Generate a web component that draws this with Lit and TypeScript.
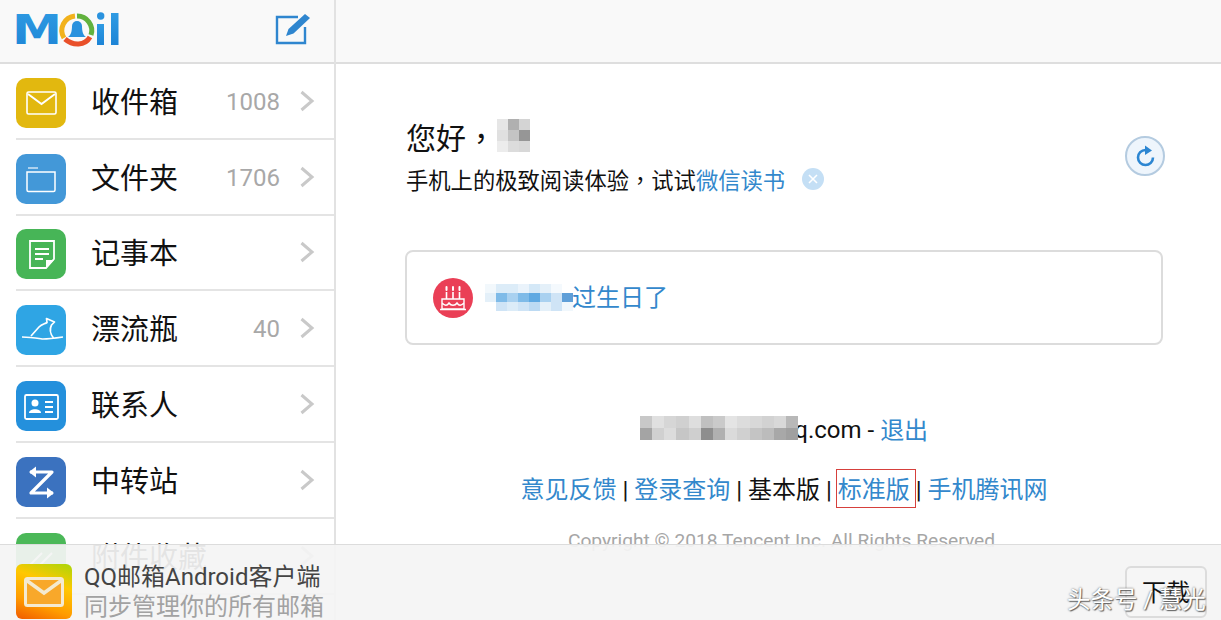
import { LitElement, css, html, svg } from "lit";
import { customElement } from "lit/decorators.js";

const chevron = html`<svg class="chev" viewBox="0 0 16 22"><path d="M2.5 2 L13 11 L2.5 20" fill="none" stroke="#c9c9c9" stroke-width="3"/></svg>`;

const icons: Record<string, unknown> = {
  mail: svg`<rect x="11" y="14" width="29" height="22" rx="1.5" fill="none" stroke="#fff" stroke-width="1.6"/><path d="M12 16 L25.5 26 L39 16" fill="none" stroke="#fff" stroke-width="2"/>`,
  folder: svg`<path d="M11 18 V36 a1.5 1.5 0 0 0 1.5 1.5 H37.5 a1.5 1.5 0 0 0 1.5 -1.5 V18 Z" fill="none" stroke="#fff" stroke-width="1.5"/><path d="M12 14 H22" stroke="#cfe4f6" stroke-width="1.5"/>`,
  note: svg`<path d="M14 12 H38 V30 L30 39 H14 Z" fill="none" stroke="#fff" stroke-width="1.8"/><path d="M38 31 L30 39 V31 Z" fill="#fff"/><path d="M19 20 H33 M19 25 H33 M19 30 H27" stroke="#fff" stroke-width="1.8"/>`,
  bird: svg`<path d="M15 31 L23 22 C26 19 29 19 31 17.5 L30.5 13.5 L38.5 17 L35.5 20 C33.5 24 33.5 28 37.5 33" fill="none" stroke="#fff" stroke-width="1.7" stroke-linejoin="round"/><path d="M6 32 C14 32 20 33 27 34 C33 34 40 33 47 32" fill="none" stroke="#fff" stroke-width="1.6"/>`,
  card: svg`<rect x="9" y="14" width="33" height="24" rx="1.5" fill="none" stroke="#fff" stroke-width="1.8"/><circle cx="19" cy="22" r="3.5" fill="#fff"/><path d="M13 32 C13 27 25 27 25 32 Z" fill="#fff"/><path d="M29 21 H37 M29 26 H37 M29 31 H37" stroke="#fff" stroke-width="1.8"/>`,
  transfer: svg`<path d="M14 15 H36 L15 36 H37" fill="none" stroke="#fff" stroke-width="3.2" stroke-linejoin="round"/><path d="M20 9.5 L13 15 L20 20.5 Z M31 30.5 L38 36 L31 41.5 Z" fill="#fff"/>`,
  clip: svg`<path d="M12 34 L26 20 M20 36 L36 20" stroke="#fff" stroke-width="1.8"/>`,
};

const rows = [
  { name: "收件箱", count: "1008", icon: "mail", color: "#e2b80f" },
  { name: "文件夹", count: "1706", icon: "folder", color: "#4398d8" },
  { name: "记事本", count: "", icon: "note", color: "#47b557" },
  { name: "漂流瓶", count: "40", icon: "bird", color: "#2fa5e4" },
  { name: "联系人", count: "", icon: "card", color: "#2490dc" },
  { name: "中转站", count: "", icon: "transfer", color: "#3b72bf" },
  { name: "附件收藏", count: "", icon: "clip", color: "#4bb858" },
];

// censored bits of the screenshot, each cell one grey value
const nameCells = [
  ["#e6e6e6", "#b0b0b0", "#d4d4d4"],
  ["#e0e0e0", "#c4c4c4", "#969696"],
  ["#ececec", "#dcdcdc", "#d8d8d8"],
];
const birthdayCells = [
  ["#f2f8fc", "#dcecf8", "#dcecf8", "#eaf3fb", "#d4e8f7", "#e4f0f9", "#f4f9fd", "#ffffff"],
  ["#e4f0f9", "#7fbbe8", "#a9d1f0", "#7fbbe8", "#5fa9e2", "#a9d1f0", "#cfe4f6", "#5f9fd8"],
  ["#ffffff", "#cfe4f6", "#dcecf8", "#cfe4f6", "#bcdaf3", "#e4f0f9", "#cfe4f6", "#f0f7fc"],
];
const mailCells = [
  ["#c8c8c8", "#e0e0e0", "#d6d6d6", "#d0d0d0", "#dedede", "#c0c0c0", "#cacaca", "#e4e4e4", "#dcdcdc", "#d8d8d8", "#d2d2d2", "#d8d8d8", "#b8b8b8"],
  ["#a4a4a4", "#d0d0d0", "#dcdcdc", "#c6c6c6", "#cfcfcf", "#8e8e8e", "#b0b0b0", "#dadada", "#d0d0d0", "#c4c4c4", "#bcbcbc", "#a8a8a8", "#a0a0a0"],
];

const mosaic = (cells: string[][], w: number, h: number) => html`
  <span class="mosaic">
    ${cells.map(
      (r) => html`<span class="mrow">
        ${r.map((c) => html`<i style="width:${w}px;height:${h}px;background:${c}"></i>`)}
      </span>`
    )}
  </span>
`;

@customElement("app-root")
export class AppRoot extends LitElement {
  render() {
    return html`
      <div class="page">
        <aside class="side">
          <div class="side-head">
            <svg class="logo" width="104" height="36" viewBox="0 0 104 36">
              <defs>
                <linearGradient id="lg" x1="0" y1="0" x2="0" y2="1">
                  <stop offset="0" stop-color="#2f9be3" />
                  <stop offset="1" stop-color="#1d84d6" />
                </linearGradient>
              </defs>
              <text x="-3" y="33" font-family="DejaVu Sans" font-weight="700" font-size="40" fill="url(#lg)" textLength="50" lengthAdjust="spacingAndGlyphs">M</text>
              <path d="M49 27 A14.5 14.5 0 0 1 60 5" fill="none" stroke="#f2b21c" stroke-width="5" />
              <path d="M62 5 A14.5 14.5 0 0 1 76 24" fill="none" stroke="#62b23e" stroke-width="5" />
              <path d="M75 26 C70 35 58 35 50 28" fill="none" stroke="#e9502a" stroke-width="5" />
              <circle cx="62" cy="15" r="5" fill="#2a92de" />
              <path d="M57 15 H67 C67 20 68 24 71 26 H53 C56 24 57 20 57 15 Z" fill="#2a92de" />
              <rect x="82" y="13" width="7" height="21" fill="url(#lg)" />
              <circle cx="85.7" cy="5" r="3.7" fill="#2a92de" />
              <rect x="96" y="2" width="7.5" height="32" fill="url(#lg)" />
            </svg>
            <svg class="compose" width="36" height="34" viewBox="0 0 36 34">
              <path d="M24 5 H3 V31 H31 V15" fill="none" stroke="#2f86cf" stroke-width="2.4" />
              <path d="M12 24 L14.5 17 L31 2 L36 6 L19.5 21.5 Z" fill="#2f86cf" />
            </svg>
          </div>
          ${rows.map(
            (r) => html`
              <div class="row">
                <div class="row-in">
                  <span class="icon" style="background:${r.color}">
                    <svg width="50" height="50" viewBox="0 0 50 50">${icons[r.icon]}</svg>
                  </span>
                  <span class="name">${r.name}</span>
                  <span class="count">${r.count}</span>
                  ${chevron}
                </div>
              </div>
            `
          )}
        </aside>

        <main class="main">
          <div class="main-head"></div>
          <div class="content">
            <div class="greet">
              <div>
                <div class="hello">您好<span class="tc">，</span>${mosaic(nameCells, 11, 11)}</div>
                <div class="tip">
                  手机上的极致阅读体验<span class="tc">，</span>试试<a>微信读书</a>
                  <svg class="tip-x" width="24" height="24" viewBox="0 0 24 24">
                    <circle cx="12" cy="12" r="11" fill="#c4dff5" />
                    <path d="M8 8 L16 16 M16 8 L8 16" stroke="#fff" stroke-width="1.6" />
                  </svg>
                </div>
              </div>
              <button class="refresh">
                <svg width="24" height="24" viewBox="0 0 24 24">
                  <path d="M12.5 6 A7.5 7.5 0 1 0 20 13.5" fill="none" stroke="#2c86d2" stroke-width="2.6" />
                  <path d="M12 1.5 L19 6.5 L12 11 Z" fill="#2c86d2" />
                </svg>
              </button>
            </div>

            <div class="notice">
              <svg width="40" height="40" viewBox="0 0 40 40">
                <circle cx="20" cy="20" r="20" fill="#ea3f56" />
                <path d="M9 21 H31 V31 H9 Z M7 31.5 H33 M9 25 C12 28 14 28 16 25 C18 28 22 28 24 25 C26 28 28 28 31 25" fill="none" stroke="#fff" stroke-width="1.4" />
                <path d="M13.5 14 V21 M20 14 V21 M26.5 14 V21" stroke="#fff" stroke-width="1.6" />
                <path d="M13.5 9 V12 M20 9 V12 M26.5 9 V12" stroke="#fff" stroke-width="2" stroke-linecap="round" />
              </svg>
              <span class="notice-text">${mosaic(birthdayCells, 11, 9)}<a>过生日了</a></span>
            </div>

            <div class="foot">
              <div class="acct">${mosaic(mailCells, 12.2, 12)}<span>q.com - </span><a>退出</a></div>
              <div class="links">
                <a>意见反馈</a> | <a>登录查询</a> | 基本版 | <a class="boxed">标准版</a> | <a>手机腾讯网</a>
              </div>
              <div class="copy">Copyright © 2018 Tencent Inc. All Rights Reserved</div>
            </div>
          </div>
        </main>

        <div class="banner">
          <span class="app-icon">
            <svg width="40" height="30" viewBox="0 0 40 30">
              <rect x="1.5" y="1.5" width="37" height="27" rx="2" fill="#f8a82a" stroke="#f4ead0" stroke-width="3" />
              <path d="M2 3 L20 16 L38 3" fill="none" stroke="#f4ead0" stroke-width="3.5" />
            </svg>
          </span>
          <div class="app-text">
            <div class="app-name">QQ邮箱Android客户端</div>
            <div class="app-sub">同步管理你的所有邮箱</div>
          </div>
          <button class="dl">下载</button>
        </div>
        <div class="mark">头条号 / 慧光</div>
      </div>
    `;
  }

  static styles = css`
    :host {
      display: block;
      font-family: Roboto, "Noto Sans CJK SC", sans-serif;
      color: #111;
    }
    a {
      color: #3388cc;
    }
    .tc {
      font-family: "Noto Sans CJK TC", sans-serif;
    }

    .page {
      position: relative;
      display: flex;
      height: 620px;
      overflow: hidden;
      background: #fff;
    }

    .side {
      flex: 0 0 336px;
      box-sizing: border-box;
      border-right: 2px solid #e2e2e2;
    }
    .side-head {
      display: flex;
      align-items: center;
      justify-content: space-between;
      box-sizing: border-box;
      height: 64px;
      padding: 0 24px 4px 15px;
      background: #f9f9f9;
      border-bottom: 2px solid #dedede;
    }
    .logo {
      overflow: visible;
    }
    .row {
      height: 75.8px;
      padding-left: 16px;
      box-sizing: border-box;
    }
    .row-in {
      display: flex;
      align-items: center;
      height: 100%;
      box-sizing: border-box;
      padding-right: 19px;
      border-bottom: 2px solid #e4e4e4;
    }
    .icon {
      flex: none;
      width: 50px;
      height: 50px;
      margin-top: 4px;
      border-radius: 10px;
    }
    .icon svg {
      display: block;
    }
    .name {
      margin-left: 25px;
      padding-bottom: 2px;
      font-size: 29px;
    }
    .count {
      flex: 1;
      padding-top: 2px;
      text-align: right;
      font-size: 24px;
      color: #a8a8a8;
    }
    .chev {
      flex: none;
      width: 16px;
      height: 22px;
      margin-left: 19px;
    }

    .main {
      flex: 1;
      min-width: 0;
    }
    .main-head {
      height: 64px;
      box-sizing: border-box;
      background: #f9f9f9;
      border-bottom: 2px solid #dedede;
    }
    .content {
      padding: 54px 58px 0 69px;
    }
    .greet {
      display: flex;
      align-items: center;
      justify-content: space-between;
      height: 76px;
    }
    .hello {
      display: flex;
      align-items: center;
      height: 40px;
      padding-left: 1px;
      font-size: 30px;
    }
    .hello .mosaic {
      margin-left: 1px;
    }
    .tip {
      display: flex;
      align-items: center;
      height: 36px;
      margin-top: 5px;
      padding-left: 1px;
      font-size: 22.3px;
    }
    .tip-x {
      margin-left: 16px;
    }
    .refresh {
      display: flex;
      align-items: center;
      justify-content: center;
      box-sizing: border-box;
      width: 40px;
      height: 40px;
      margin: 0 -2px 0 0;
      padding: 0;
      border: 2px solid #b4cbe0;
      border-radius: 50%;
      background: #eef5fc;
    }

    .mosaic {
      display: inline-flex;
      flex-direction: column;
      vertical-align: middle;
    }
    .mrow {
      display: flex;
    }
    .mrow i {
      display: block;
    }

    .notice {
      display: flex;
      align-items: center;
      box-sizing: border-box;
      height: 95px;
      margin-top: 56px;
      padding-left: 26px;
      border: 2px solid #dcdcdc;
      border-radius: 8px;
    }
    .notice-text {
      display: flex;
      align-items: center;
      margin-left: 10px;
      font-size: 24px;
    }
    .notice-text .mosaic {
      margin-left: 2px;
      margin-right: -1px;
    }
    .notice-text a {
      margin-top: -4px;
    }

    .foot {
      margin-top: 63px;
      text-align: center;
      font-size: 24px;
    }
    .acct {
      display: flex;
      align-items: center;
      justify-content: center;
      height: 44px;
      white-space: pre;
    }
    .acct .mosaic {
      position: relative;
      z-index: 1;
      margin: -4px -4px 0 0;
    }
    .acct a {
      margin-top: -4px;
    }
    .links {
      height: 44px;
      margin-top: 16px;
      line-height: 44px;
      white-space: nowrap;
    }
    .boxed {
      position: relative;
      display: inline-block;
    }
    .boxed::after {
      content: "";
      position: absolute;
      left: -2px;
      right: -6px;
      top: 1px;
      bottom: 4px;
      border: 1px solid #d6403c;
    }
    .copy {
      margin-top: 17px;
      padding-right: 5px;
      font-size: 19.2px;
      color: #a6a6a6;
      white-space: nowrap;
    }

    .banner {
      position: absolute;
      left: 0;
      right: 0;
      top: 544px;
      height: 76px;
      display: flex;
      box-sizing: border-box;
      padding: 0 14px 0 16px;
      background: rgba(244, 244, 244, 0.93);
      border-top: 1px solid #dcdcdc;
    }
    .app-icon {
      display: flex;
      align-items: center;
      justify-content: center;
      width: 56px;
      height: 55px;
      margin-top: 19px;
      border-radius: 6px;
      background: linear-gradient(200deg, #a9d60a, #ffc800 35%, #ff9c00 70%, #f05a00);
    }
    .app-text {
      margin-left: 12px;
      margin-top: 17px;
      font-size: 24px;
      line-height: 30px;
      white-space: nowrap;
    }
    .app-name {
      color: #444;
    }
    .app-sub {
      color: #a2a2a2;
    }
    .dl {
      width: 82px;
      height: 52px;
      margin: 21px 0 0 auto;
      padding: 0 0 4px;
      font: inherit;
      font-size: 24px;
      color: #111;
      background: #f6f6f6;
      border: 2px solid #dcdcdc;
      border-radius: 6px;
    }

    .mark {
      position: absolute;
      left: 1067px;
      top: 585px;
      font-size: 23.5px;
      line-height: 30px;
      color: #fff;
      white-space: nowrap;
      text-shadow: 0 0 2px #555, 1px 1px 1px #666;
    }
  `;
}

declare global {
  interface HTMLElementTagNameMap {
    "app-root": AppRoot;
  }
}
